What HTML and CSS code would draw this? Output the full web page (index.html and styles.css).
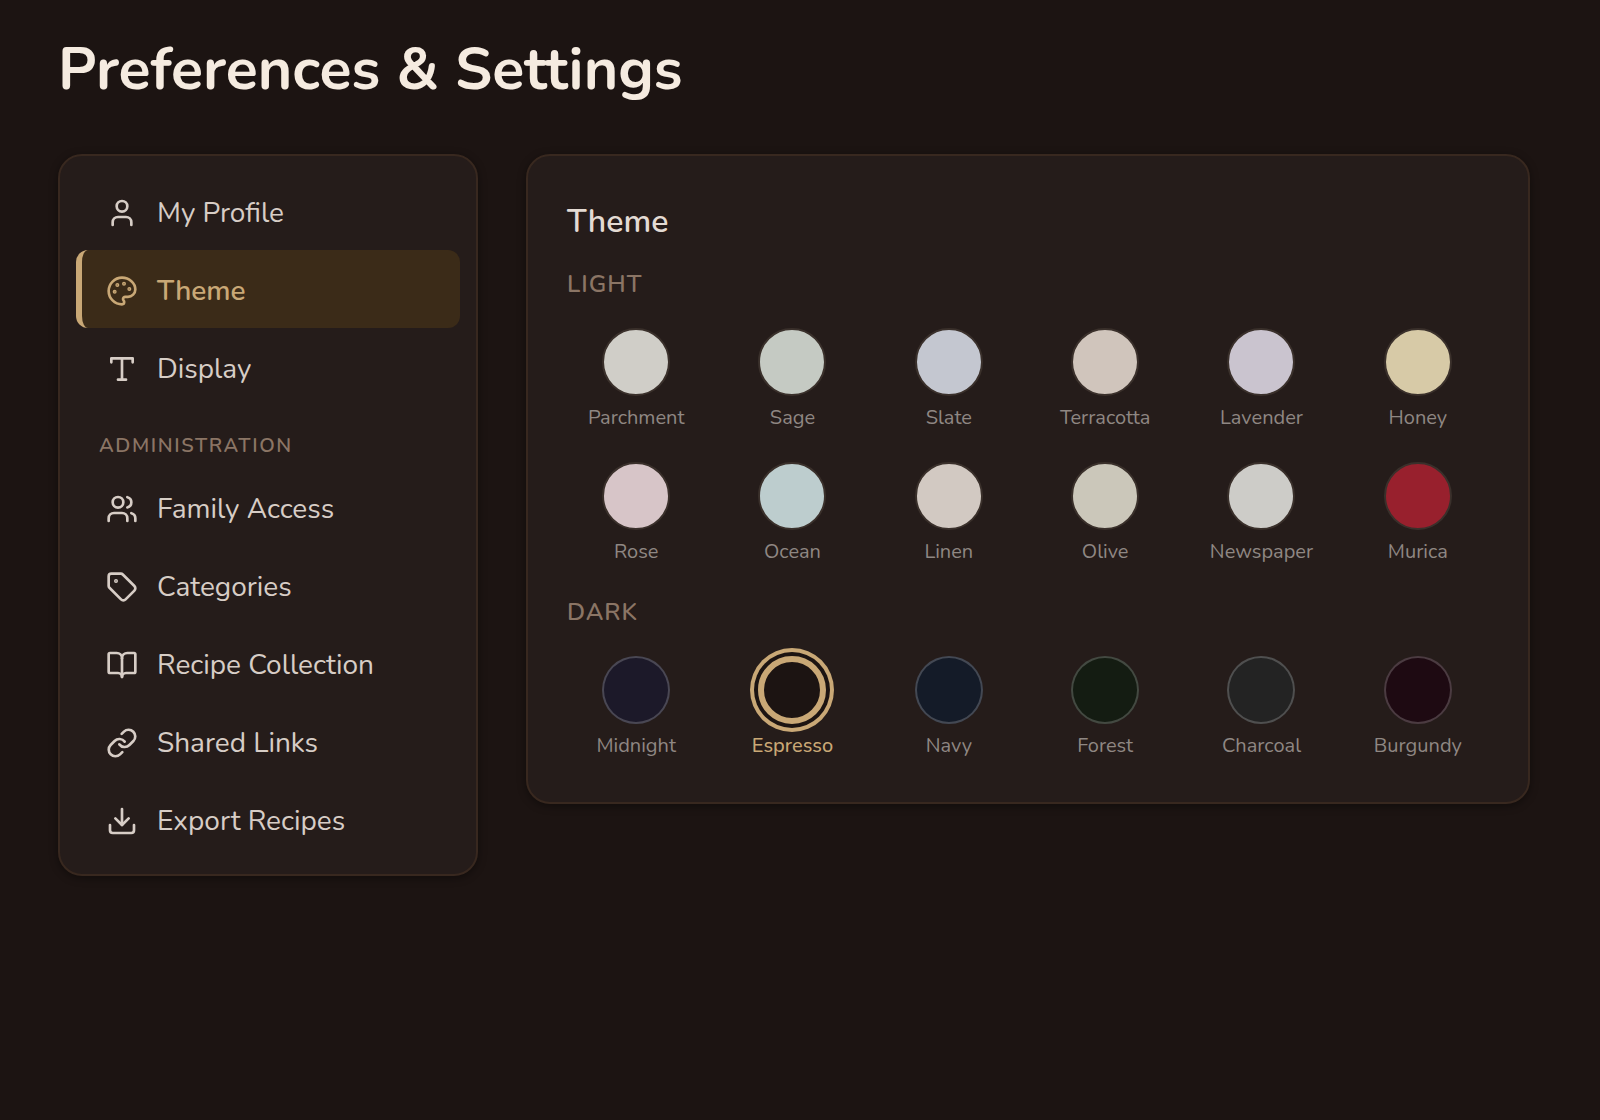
FILE: index.html
```html
<!DOCTYPE html>
<html lang="en">
<head>
    <meta charset="UTF-8">
    <meta name="viewport" content="width=device-width, initial-scale=1.0">
    <title>Preferences &amp; Settings</title>
    <link rel="stylesheet" href="styles.css">
</head>
<body>
    <div class="settings-page">
        <h1 class="page-title">Preferences &amp; Settings</h1>

        <div class="settings-layout">
            <!-- Sidebar -->
            <nav class="card settings-nav" aria-label="Settings">
                <a href="#profile" class="nav-item">
                    <svg class="nav-icon" viewBox="0 0 24 24"><path d="M19 21v-2a4 4 0 0 0-4-4H9a4 4 0 0 0-4 4v2"/><circle cx="12" cy="7" r="4"/></svg>
                    My Profile
                </a>
                <a href="#theme" class="nav-item active" aria-current="page">
                    <svg class="nav-icon" viewBox="0 0 24 24"><circle cx="13.5" cy="6.5" r=".5" fill="currentColor"/><circle cx="17.5" cy="10.5" r=".5" fill="currentColor"/><circle cx="8.5" cy="7.5" r=".5" fill="currentColor"/><circle cx="6.5" cy="12.5" r=".5" fill="currentColor"/><path d="M12 2C6.5 2 2 6.5 2 12s4.5 10 10 10c.926 0 1.648-.746 1.648-1.688 0-.437-.18-.835-.437-1.125-.29-.289-.438-.652-.438-1.125a1.64 1.64 0 0 1 1.668-1.668h1.996c3.051 0 5.555-2.503 5.555-5.554C21.965 6.012 17.461 2 12 2z"/></svg>
                    Theme
                </a>
                <a href="#display" class="nav-item">
                    <svg class="nav-icon" viewBox="0 0 24 24"><path d="M4 7V4h16v3"/><path d="M9 20h6"/><path d="M12 4v16"/></svg>
                    Display
                </a>

                <h2 class="nav-heading">Administration</h2>
                <a href="#family" class="nav-item">
                    <svg class="nav-icon" viewBox="0 0 24 24"><path d="M16 21v-2a4 4 0 0 0-4-4H6a4 4 0 0 0-4 4v2"/><circle cx="9" cy="7" r="4"/><path d="M22 21v-2a4 4 0 0 0-3-3.87"/><path d="M16 3.13a4 4 0 0 1 0 7.75"/></svg>
                    Family Access
                </a>
                <a href="#categories" class="nav-item">
                    <svg class="nav-icon" viewBox="0 0 24 24"><path d="M12.586 2.586A2 2 0 0 0 11.172 2H4a2 2 0 0 0-2 2v7.172a2 2 0 0 0 .586 1.414l8.704 8.704a2.426 2.426 0 0 0 3.42 0l6.58-6.58a2.426 2.426 0 0 0 0-3.42z"/><circle cx="7.5" cy="7.5" r=".5" fill="currentColor"/></svg>
                    Categories
                </a>
                <a href="#collection" class="nav-item">
                    <svg class="nav-icon" viewBox="0 0 24 24"><path d="M12 7v14"/><path d="M3 18a1 1 0 0 1-1-1V4a1 1 0 0 1 1-1h5a4 4 0 0 1 4 4 4 4 0 0 1 4-4h5a1 1 0 0 1 1 1v13a1 1 0 0 1-1 1h-6a3 3 0 0 0-3 3 3 3 0 0 0-3-3z"/></svg>
                    Recipe Collection
                </a>
                <a href="#links" class="nav-item">
                    <svg class="nav-icon" viewBox="0 0 24 24"><path d="M10 13a5 5 0 0 0 7.54.54l3-3a5 5 0 0 0-7.07-7.07l-1.72 1.71"/><path d="M14 11a5 5 0 0 0-7.54-.54l-3 3a5 5 0 0 0 7.07 7.07l1.71-1.71"/></svg>
                    Shared Links
                </a>
                <a href="#export" class="nav-item">
                    <svg class="nav-icon" viewBox="0 0 24 24"><path d="M21 15v4a2 2 0 0 1-2 2H5a2 2 0 0 1-2-2v-4"/><path d="M7 10l5 5 5-5"/><path d="M12 15V3"/></svg>
                    Export Recipes
                </a>
            </nav>

            <!-- Theme picker -->
            <main class="card theme-panel" id="theme">
                <h2 class="panel-title">Theme</h2>

                <section class="theme-group">
                    <h3 class="group-title">Light</h3>
                    <div class="swatch-grid">
                        <button type="button" class="swatch parchment"><span class="swatch-color"></span>Parchment</button>
                        <button type="button" class="swatch sage"><span class="swatch-color"></span>Sage</button>
                        <button type="button" class="swatch slate"><span class="swatch-color"></span>Slate</button>
                        <button type="button" class="swatch terracotta"><span class="swatch-color"></span>Terracotta</button>
                        <button type="button" class="swatch lavender"><span class="swatch-color"></span>Lavender</button>
                        <button type="button" class="swatch honey"><span class="swatch-color"></span>Honey</button>
                        <button type="button" class="swatch rose"><span class="swatch-color"></span>Rose</button>
                        <button type="button" class="swatch ocean"><span class="swatch-color"></span>Ocean</button>
                        <button type="button" class="swatch linen"><span class="swatch-color"></span>Linen</button>
                        <button type="button" class="swatch olive"><span class="swatch-color"></span>Olive</button>
                        <button type="button" class="swatch newspaper"><span class="swatch-color"></span>Newspaper</button>
                        <button type="button" class="swatch murica"><span class="swatch-color"></span>Murica</button>
                    </div>
                </section>

                <section class="theme-group dark">
                    <h3 class="group-title">Dark</h3>
                    <div class="swatch-grid">
                        <button type="button" class="swatch midnight"><span class="swatch-color"></span>Midnight</button>
                        <button type="button" class="swatch espresso selected" aria-pressed="true"><span class="swatch-color"></span>Espresso</button>
                        <button type="button" class="swatch navy"><span class="swatch-color"></span>Navy</button>
                        <button type="button" class="swatch forest"><span class="swatch-color"></span>Forest</button>
                        <button type="button" class="swatch charcoal"><span class="swatch-color"></span>Charcoal</button>
                        <button type="button" class="swatch burgundy"><span class="swatch-color"></span>Burgundy</button>
                    </div>
                </section>
            </main>
        </div>
    </div>
</body>
</html>
```
FILE: styles.css
```css
:root {
    --bg: #1c1412;
    --card: #251c1a;
    --card-border: #38281f;
    --heading: #f5ebe0;
    --text: #d7cdc6;
    --muted: #8b7565;
    --label: #8f8783;
    --accent: #c9a876;
    --accent-bg: #3b2b18;
}

* {
    margin: 0;
    padding: 0;
    box-sizing: border-box;
}

body {
    font-family: Nunito, Lato, sans-serif;
    background: var(--bg);
    color: var(--text);
    min-height: 100vh;
}

.settings-page {
    padding: 34px 70px 32px 58px;
}

.page-title {
    font-size: 59px;
    line-height: 72px;
    font-weight: 700;
    color: var(--heading);
    margin-bottom: 48px;
}

.settings-layout {
    display: grid;
    grid-template-columns: 420px 1fr;
    gap: 48px;
    align-items: start;
}

.card {
    background: var(--card);
    border: 2px solid var(--card-border);
    border-radius: 24px;
    box-shadow: 0 2px 8px rgba(0, 0, 0, 0.4);
}

/* Sidebar */
.settings-nav {
    padding: 16px;
}

.nav-item {
    display: flex;
    align-items: center;
    gap: 19px;
    height: 78px;
    padding: 3px 24px 0;
    border-left: 6px solid transparent;
    border-radius: 12px;
    color: var(--text);
    font-size: 28px;
    text-decoration: none;
}

.nav-item.active {
    background: var(--accent-bg);
    border-left-color: var(--accent);
    color: var(--accent);
    font-weight: 600;
}

.nav-icon {
    width: 32px;
    height: 32px;
    flex-shrink: 0;
    fill: none;
    stroke: currentColor;
    stroke-width: 2;
    stroke-linecap: round;
    stroke-linejoin: round;
}

.nav-heading {
    padding: 28px 23px 10px;
    font-size: 20px;
    line-height: 24px;
    font-weight: 600;
    letter-spacing: 0.08em;
    text-transform: uppercase;
    color: var(--muted);
}

/* Theme picker */
.theme-panel {
    padding: 42px 41px 34px 39px;
}

.panel-title {
    font-size: 32px;
    line-height: 48px;
    font-weight: 600;
    color: #e3dad3;
    margin-bottom: 22px;
}

.theme-group + .theme-group {
    margin-top: 22px;
}

.group-title {
    font-size: 24px;
    line-height: 32px;
    font-weight: 600;
    letter-spacing: 1px;
    text-transform: uppercase;
    color: var(--muted);
    margin-bottom: 20px;
}

.swatch-grid {
    display: grid;
    grid-template-columns: repeat(6, 1fr);
    gap: 14px 18px;
}

.swatch {
    display: flex;
    flex-direction: column;
    align-items: center;
    gap: 8px;
    padding: 8px 0;
    background: none;
    border: none;
    color: var(--label);
    font-family: inherit;
    font-size: 20px;
    line-height: 28px;
    cursor: pointer;
}

.swatch-color {
    width: 68px;
    height: 68px;
    border: 2px solid #3a302b;
    border-radius: 50%;
}

.dark .swatch-color {
    border-color: rgba(255, 255, 255, 0.2);
}

.swatch.selected {
    color: var(--accent);
    font-weight: 500;
}

.swatch.selected .swatch-color {
    border: 6px solid var(--accent);
    box-shadow: 0 0 0 4px var(--bg), 0 0 0 8px var(--accent);
}

.parchment .swatch-color { background: #d0cec8; }
.sage .swatch-color { background: #c5cac3; }
.slate .swatch-color { background: #c4c7d0; }
.terracotta .swatch-color { background: #d0c5bc; }
.lavender .swatch-color { background: #cac4cf; }
.honey .swatch-color { background: #d7caa7; }
.rose .swatch-color { background: #d7c5c8; }
.ocean .swatch-color { background: #bdcdce; }
.linen .swatch-color { background: #d2c9c2; }
.olive .swatch-color { background: #cbc7ba; }
.newspaper .swatch-color { background: #cdccc8; }
.murica .swatch-color { background: #98202d; }
.midnight .swatch-color { background: #1c1929; }
.espresso .swatch-color { background: #1c1412; }
.navy .swatch-color { background: #141b28; }
.forest .swatch-color { background: #141c12; }
.charcoal .swatch-color { background: #232323; }
.burgundy .swatch-color { background: #1e0a12; }
```
